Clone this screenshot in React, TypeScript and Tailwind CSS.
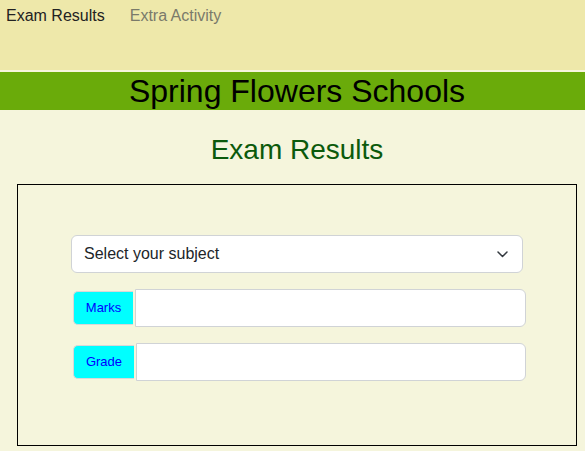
import React from "react";

export default function App() {
  return (
    <div className="min-h-[451px] w-[585px] bg-[#f5f5dc]" style={{ fontFamily: '"Liberation Sans", Arial, sans-serif' }}>
      <nav className="h-[70px] bg-[#eee8aa] flex items-start pt-[6px]">
        <span className="ml-[6px] text-[16px] leading-[20px] text-[#222]">Exam Results</span>
        <span className="ml-[25px] text-[16px] leading-[20px] text-[#7a7a6a]">Extra Activity</span>
      </nav>
      <div className="h-[2px] bg-[#f7f5dc]" />
      <div className="h-[38px] bg-[#6aab0a] flex items-center justify-center pl-[9px]">
        <span className="text-[32px] leading-[38px] text-black">Spring Flowers Schools</span>
      </div>
      <h2 className="mt-[23px] pl-[9px] text-center text-[28px] leading-[34px] text-[#0b5a0b]">Exam Results</h2>
      <div className="mt-[17px] ml-[17px] w-[560px] h-[262px] border border-black pt-[50px] pl-[53px]">
        <div className="w-[452px] h-[38px] bg-white border border-[#d0d3d6] rounded-[6px] flex items-center justify-between pl-[12px] pr-[14px]">
          <span className="text-[16px] text-[#212529]">Select your subject</span>
          <svg width="11" height="7" viewBox="0 0 11 7">
            <polyline points="1,1 5.5,5.5 10,1" fill="none" stroke="#343a40" strokeWidth="1.5" strokeLinecap="round" strokeLinejoin="round" />
          </svg>
        </div>
        <div className="mt-[16px] flex items-center">
          <div className="ml-[2px] w-[60px] h-[34px] bg-[#00ffff] rounded-l-[5px] border border-[#d8d8d8] border-r-0 flex items-center justify-center text-[13px] text-[#0000ff]">Marks</div>
          <div className="ml-[2px] w-[391px] h-[38px] bg-white border border-[#d0d3d6] rounded-r-[6px]" />
        </div>
        <div className="mt-[16px] flex items-center">
          <div className="ml-[2px] w-[61px] h-[34px] bg-[#00ffff] rounded-l-[5px] border border-[#d8d8d8] border-r-0 flex items-center justify-center text-[13px] text-[#0000ff]">Grade</div>
          <div className="ml-[2px] w-[390px] h-[38px] bg-white border border-[#d0d3d6] rounded-r-[6px]" />
        </div>
      </div>
    </div>
  );
}
